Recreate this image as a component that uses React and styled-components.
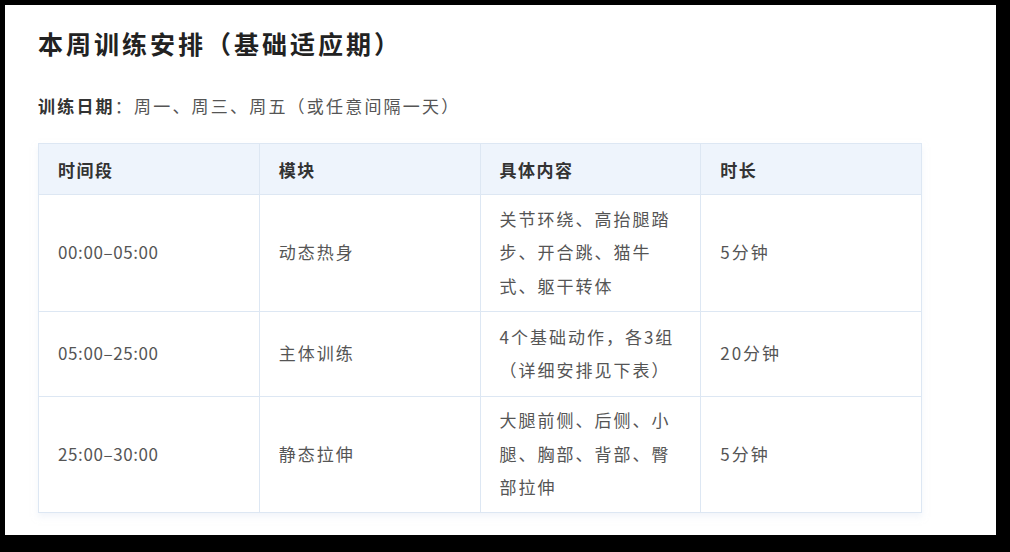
import React from 'react';
import styled, { createGlobalStyle } from 'styled-components';

const GlobalStyle = createGlobalStyle`
  html, body {
    margin: 0;
    padding: 0;
    background: #000;
  }
  body {
    font-family: "Noto Sans CJK SC", "Noto Sans", sans-serif;
  }
`;

const Panel = styled.div`
  width: 991px;
  height: 530px;
  margin: 5px;
  box-sizing: border-box;
  padding: 21px 33px 0 33px;
  background: #fff;
`;

const Title = styled.h1`
  margin: 0;
  font-size: 25px;
  line-height: 34px;
  letter-spacing: 3px;
  font-weight: 700;
  color: #222;
`;

const Meta = styled.p`
  margin: 31px 0 22px 0;
  font-size: 17px;
  line-height: 30px;
  letter-spacing: 2.2px;
  color: #555;
`;

const Label = styled.b`
  color: #333;
  font-weight: 700;
`;

const Table = styled.table`
  width: 884px;
  border-collapse: collapse;
  table-layout: fixed;
  box-shadow: 0 4px 6px rgba(230, 236, 245, 0.5);
`;

const Th = styled.th`
  height: 51px;
  box-sizing: border-box;
  padding: 0 19px;
  text-align: left;
  font-size: 17px;
  letter-spacing: 1.5px;
  font-weight: 700;
  color: #333;
  background: #eef4fc;
  border: 1px solid #dde7f3;
`;

const Td = styled.td`
  height: ${p => p.h}px;
  box-sizing: border-box;
  padding: 6px 19px 8px 19px;
  font-size: 17px;
  line-height: 33.5px;
  letter-spacing: ${p => (p.$num ? '0.6px' : '2px')};
  color: #555;
  border: 1px solid #dde7f3;
  vertical-align: middle;
`;

const rows = [
  { time: '00:00–05:00', mod: '动态热身', detail: '关节环绕、高抬腿踏步、开合跳、猫牛式、躯干转体', dur: '5分钟', h: 117 },
  { time: '05:00–25:00', mod: '主体训练', detail: '4个基础动作，各3组（详细安排见下表）', dur: '20分钟', h: 85 },
  { time: '25:00–30:00', mod: '静态拉伸', detail: '大腿前侧、后侧、小腿、胸部、背部、臀部拉伸', dur: '5分钟', h: 116 },
];

export default function App() {
  return (
    <>
      <GlobalStyle />
      <Panel>
        <Title>本周训练安排（基础适应期）</Title>
        <Meta>
          <Label>训练日期</Label>：周一、周三、周五（或任意间隔一天）
        </Meta>
        <Table>
          <thead>
            <tr>
              <Th>时间段</Th>
              <Th>模块</Th>
              <Th>具体内容</Th>
              <Th>时长</Th>
            </tr>
          </thead>
          <tbody>
            {rows.map(r => (
              <tr key={r.time}>
                <Td h={r.h} $num>{r.time}</Td>
                <Td h={r.h}>{r.mod}</Td>
                <Td h={r.h}>{r.detail}</Td>
                <Td h={r.h}>{r.dur}</Td>
              </tr>
            ))}
          </tbody>
        </Table>
      </Panel>
    </>
  );
}
